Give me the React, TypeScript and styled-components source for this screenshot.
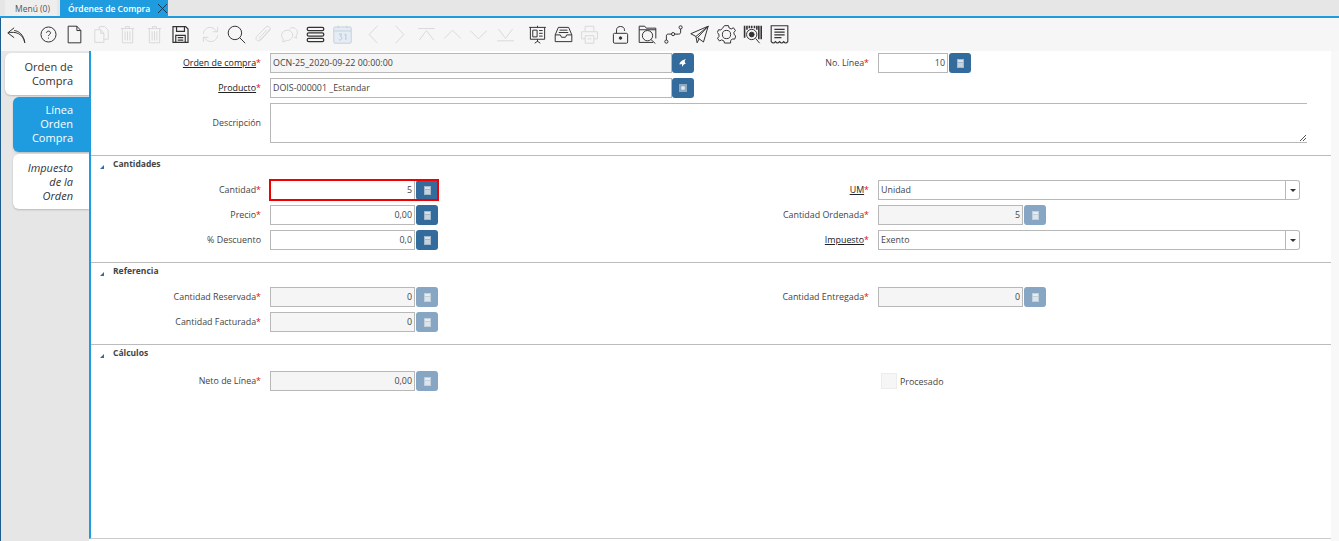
import React from 'react';
import styled, {createGlobalStyle} from 'styled-components';

const Global = createGlobalStyle`
  html, body {
    margin: 0;
    height: 100%;
    background: #fff;
    overflow: hidden;
    font-family: 'Open Sans', 'Noto Sans', sans-serif;
    font-size: 8.9px;
    color: #444;
  }
  #root {
    height: 100%;
  }
`;

const icons: Record<string, React.ReactNode> = {
  back: <path d="M9 3.500 1 10l8 6M1.500 10c9-2.500 19 1 21 12.500M9 7c6 .5 12 5 13.500 15.500" />,
  help: (
    <>
      <circle cx="12" cy="12" r="9.500" />
      <path d="M9.500 10c0-3 5-3 5 0 0 2-2.500 2-2.500 4M12 16v1.200" />
    </>
  ),
  file: <path d="M4 1.500h11l5 5.500v15.500H4zM15 1.500V7h5" />,
  copy: (
    <>
      <path d="M9 5.500V2h7l4.500 4.500V18H15" />
      <path d="M3.500 6H11l4 4.500V22H3.500zM11 6v4.500h4" />
    </>
  ),
  trash: (
    <>
      <path d="M3.500 4.500h17M9.500 4.500V2h5v2.500M5.500 4.500v18h13v-18" />
      <path d="M9 8v11.500M12 8v11.500M15 8v11.500" />
    </>
  ),
  save: (
    <g strokeWidth="1.500">
      <path d="M2.500 2h16l3 3v17h-19z" />
      <path d="M7 2v6h10V2M6 22v-9h12v9M8.500 16h7M8.500 19h7" />
    </g>
  ),
  refresh: (
    <>
      <path d="M3 11c.8-8 10-10.500 15-5l2.500 2.500M21 2.500v6h-6" />
      <path d="M21 13c-.8 8-10 10.500-15 5l-2.500-2.500M3 21.500v-6h6" />
    </>
  ),
  search: (
    <>
      <circle cx="10" cy="10" r="8.500" />
      <path d="m16 16 7 7" />
    </>
  ),
  clip: (
    <path d="M21 5.500 8.500 19c-3 3-8-.5-5-4.500L15 2.500c2.500-2.500 7 .5 4.500 3.500L9 18c-1.200 1.200-3-.3-2-1.500l9-10.500" />
  ),
  chat: (
    <>
      <path d="M9.500 6.500C5 6.500 2 9.500 2 13c0 1.800.8 3.300 2 4.300L3.500 21.500l4.500-2c4.500.5 8-2.500 8-6.500s-3-6.500-6.500-6.500z" />
      <path d="M12 5c3-3 9.500-1.500 10 4 .1 1.500-.4 3-1.500 4l.5 3.500-3.500-1.200" />
    </>
  ),
  bars: (
    <g strokeWidth="1.600">
      <rect x="1.500" y="3" width="21" height="4" rx="2" />
      <rect x="1.500" y="10" width="21" height="4" rx="2" />
      <rect x="1.500" y="17" width="21" height="4" rx="2" />
    </g>
  ),
  calendar: (
    <>
      <rect x="1" y="2.500" width="22" height="20.500" rx="1.500" fill="#e6ecf4" stroke="#c3d0df" />
      <path d="M1 7.500h22M6.500 1v3M17.500 1v3" stroke="#c3d0df" />
      <path d="M7.500 11.500h3.500l-1.800 2.800c3 0 2.300 4.700-.2 4.700-.9 0-1.500-.3-1.800-.9M14.500 12.500l1.800-1v7.500" stroke="#b8c6d6" />
    </>
  ),
  left: <path d="M17 1 6.500 12 17 23" />,
  right: <path d="M7 1l10.500 11L7 23" />,
  top: <path d="M1.500 4.500h21M3 19l9-12 9 12" />,
  up: <path d="M1.500 17 12 6.500 22.500 17" />,
  down: <path d="M1.500 7 12 17.500 22.500 7" />,
  bottom: <path d="M1.500 20h21M3 5l9 12 9-12" />,
  board: (
    <>
      <path d="M1.500 3h21M3 3v15h18V3M12 1v2M12 18v3M12 20.500 8.500 23M12 20.500l3.500 2.500" />
      <path d="M6 6.500h5.500V15H6zM14 7h4.500M14 10.500h4.500M14 14h4.500" />
    </>
  ),
  inbox: (
    <>
      <path d="M5.500 3h13l4 9.500V21h-21v-8.500zM1.500 12.500H8l1.500 3h5l1.500-3h6.500" />
      <path d="M7 6.500h10M6 9.500h12" />
    </>
  ),
  printer: (
    <>
      <path d="M6.500 8V1.500h11V8M6.500 17.500H2V8.500h20v9h-4.500" />
      <path d="M6.500 13.500h11V23h-11zM9.500 17.500h5" />
    </>
  ),
  lock: (
    <>
      <rect x="3" y="10.500" width="18" height="12.500" rx="1.500" />
      <path d="M7 10.500V6c0-5.500 10-5.500 10 0v1.500" />
      <circle cx="12" cy="16.500" r="1.600" fill="#333" />
    </>
  ),
  folder: (
    <>
      <path d="M19 22H1.500V1.500h7l2 2.500h12v13" />
      <path d="M1.500 6h21" />
      <circle cx="12" cy="13.500" r="6.500" />
      <path d="m16.500 18.500 5.500 5" />
    </>
  ),
  route: (
    <>
      <circle cx="3" cy="21" r="2" />
      <circle cx="11.500" cy="11.500" r="2" />
      <circle cx="21" cy="3" r="2" />
      <path d="M3 19v-5c0-2 1-2.500 2.500-2.500h4M13.500 11.500H18.500c1.800 0 2.500-1 2.500-2.500V5" />
    </>
  ),
  send: <path d="M23 1.500 1 11l6.500 3.500L23 1.500 9.500 16l7.500 5.500zM7.500 14.500 9 22.500l2.500-5" />,
  gear: (
    <>
      <path d="m9.500.8h5l.8 3 2.700 1.200 2.800-1.500 2.500 3.500-2 2.400.4 2.800 2.100 1.700-1.500 4-3-.3-2 2.200-.2 3H9.500l-.8-2.700-2.800-1.300-2.800 1.400-2.500-3.400 2-2.400-.4-2.900-1.800-2 1.500-3.500 3 .3 2-2.200z" />
      <circle cx="12" cy="12" r="5.200" />
    </>
  ),
  barcode: (
    <>
      <path d="M2 1v15M5 1v5M20 1v17M23 1v17M17.500 1v5" strokeWidth="2" />
      <path d="M8 1v3M11 1v3M14.500 1v3" strokeWidth="2" />
      <circle cx="11" cy="12" r="6.500" />
      <circle cx="11" cy="12" r="3" fill="#333" />
      <path d="m16 17 5 6" />
    </>
  ),
  receipt: (
    <g strokeWidth="1.400">
      <path d="M1.500 1h21v20c-1.700 2.300-3.600 2.300-5.200 0-1.600 2.300-3.500 2.300-5.200 0-1.600 2.300-3.500 2.300-5.200 0-1.600 2.300-3.600 2.300-5.400 0z" />
      <path d="M5.500 5.500h13M5.500 9h13M5.500 12.500h13M5.500 16h9" />
    </g>
  ),
};

const toolbar = [
  {name: 'back', gap: 2},
  {name: 'help', gap: 6},
  {name: 'file'},
  {name: 'copy', off: true},
  {name: 'trash', off: true},
  {name: 'trash', off: true},
  {name: 'save'},
  {name: 'refresh', off: true, gap: 3.500},
  {name: 'search'},
  {name: 'clip', off: true},
  {name: 'chat', off: true},
  {name: 'bars'},
  {name: 'calendar', off: true},
  {name: 'left', off: true, gap: 4.500},
  {name: 'right', off: true},
  {name: 'top', off: true},
  {name: 'up', off: true},
  {name: 'down', off: true},
  {name: 'bottom', off: true},
  {name: 'board', gap: 5.500},
  {name: 'inbox'},
  {name: 'printer', off: true},
  {name: 'lock', gap: 4.500},
  {name: 'folder'},
  {name: 'route'},
  {name: 'send'},
  {name: 'gear'},
  {name: 'barcode'},
  {name: 'receipt'},
];

const Icon = ({name}: {name: string}) => (
  <svg width="19" height="19" viewBox="0 0 24 24" fill="none" stroke="currentColor" strokeWidth="1.250">
    {icons[name]}
  </svg>
);

const Calc = ({off}: {off?: boolean}) => (
  <svg width="7" height="9" viewBox="0 0 7 9">
    <rect width="7" height="9" fill={off ? '#c2d0dd' : '#a3b8cb'} />
    <rect x="1" y="1" width="5" height="2" fill={off ? '#e8edf2' : '#dbe3ea'} />
    <rect x="1" y="4" width="5" height="4" fill={off ? '#dde4eb' : '#c6d2dd'} />
  </svg>
);

const Field = ({
  value,
  width,
  off,
  focus,
}: {
  value: string;
  width: number;
  off?: boolean;
  focus?: boolean;
}) => (
  <Numeric $focus={focus}>
    <Input $w={width} $off={off} $right>
      {value}
    </Input>
    <ActionButton $off={off}>
      <Calc off={off} />
    </ActionButton>
  </Numeric>
);

const Caption = ({text, link}: {text: string; link?: boolean}) => (
  <Label>
    <LabelText $link={link}>{text}</LabelText>
    <Required>*</Required>
  </Label>
);

const Section = ({title, top, children}: {title: string; top?: number; children: React.ReactNode}) => (
  <Group>
    <GroupTitle>
      <Arrow />
      {title}
    </GroupTitle>
    <Rows $top={top}>{children}</Rows>
  </Group>
);

const Select = ({value}: {value: string}) => (
  <SelectWrap>
    <Input $grow>{value}</Input>
    <SelectButton>
      <Caret />
    </SelectButton>
  </SelectWrap>
);

export default function App() {
  return (
    <Page>
      <Global />
      <TabBar>
        <WindowTab>Menú (0)</WindowTab>
        <WindowTab $active>
          Órdenes de Compra
          <CloseIcon width="9" height="9" viewBox="0 0 9 9">
            <path d="M0 0l9 9M9 0 0 9" stroke="#1c3850" strokeWidth="1" fill="none" />
          </CloseIcon>
        </WindowTab>
      </TabBar>
      <Toolbar>
        {toolbar.map((item, i) => (
          <ToolButton key={i} $off={item.off} $gap={item.gap}>
            <Icon name={item.name} />
          </ToolButton>
        ))}
      </Toolbar>
      <Body>
        <Side>
          <SideTab $first>Orden de Compra</SideTab>
          <SideTab $active>Línea Orden Compra</SideTab>
          <SideTab $italic>Impuesto de la Orden</SideTab>
        </Side>
        <Content>
          <Head>
            <Caption text="Orden de compra" link />
            <WithButton>
              <Input $w={402} $off>
                OCN-25_2020-09-22 00:00:00
              </Input>
              <ActionButton>
                <svg width="8" height="8" viewBox="0 0 8 8">
                  <path d="M7 0C3 1 .5 3 .5 5.500L3 5v3c1-2 2-3 4-3.500-1.500-.8-1.800-3 0-4.500z" fill="#fff" />
                </svg>
              </ActionButton>
            </WithButton>
            <Caption text="No. Línea" />
            <Field value="10" width={70} />

            <Caption text="Producto" link />
            <WithButton>
              <Input $w={402}>DOIS-000001 _Estandar</Input>
              <ActionButton>
                <svg width="8" height="8" viewBox="0 0 8 8">
                  <rect width="8" height="8" fill="#8eaac3" />
                  <circle cx="4" cy="4" r="2" fill="#dfe7ee" />
                </svg>
              </ActionButton>
            </WithButton>
            <span />
            <span />

            <Label>Descripción</Label>
            <TextArea />
          </Head>

          <Section title="Cantidades">
            <Caption text="Cantidad" />
            <Field value="5" width={145} focus />
            <Caption text="UM" link />
            <Select value="Unidad" />

            <Caption text="Precio" />
            <Field value="0,00" width={145} />
            <Caption text="Cantidad Ordenada" />
            <Field value="5" width={145} off />

            <Label>% Descuento</Label>
            <Field value="0,0" width={145} />
            <Caption text="Impuesto" link />
            <Select value="Exento" />
          </Section>

          <Section title="Referencia">
            <Caption text="Cantidad Reservada" />
            <Field value="0" width={145} off />
            <Caption text="Cantidad Entregada" />
            <Field value="0" width={145} off />

            <Caption text="Cantidad Facturada" />
            <Field value="0" width={145} off />
          </Section>

          <Section title="Cálculos" top={26}>
            <Caption text="Neto de Línea" />
            <Field value="0,00" width={145} off />
            <span />
            <CheckRow>
              <CheckBox />
              Procesado
            </CheckRow>
          </Section>
        </Content>
        <Track />
      </Body>
    </Page>
  );
}

const Page = styled.div`
  height: 541px;
  display: flex;
  flex-direction: column;
`;

const TabBar = styled.div`
  height: 16px;
  flex: none;
  display: flex;
  align-items: stretch;
  gap: 3px;
  padding-left: 5px;
  background: #e6e6e6;
  border-bottom: 2px solid #1f9ce0;
`;

const WindowTab = styled.div<{$active?: boolean}>`
  display: flex;
  align-items: center;
  padding: ${p => (p.$active ? '0 1px 0 8px' : '0 0 0 10px')};
  width: ${p => (p.$active ? '108px' : '52px')};
  box-sizing: border-box;
  background: ${p => (p.$active ? '#1f9ce0' : '#eeeeee')};
  color: ${p => (p.$active ? '#fff' : '#555')};
  font-weight: ${p => (p.$active ? 600 : 400)};
  font-size: 8.5px;
  white-space: nowrap;
`;

const CloseIcon = styled.svg`
  margin-left: auto;
`;

const Toolbar = styled.div`
  height: 33px;
  flex: none;
  display: flex;
  align-items: center;
  background: #f6f6f6;
  border-left: 1px solid #1d5c8c;
  box-sizing: border-box;
`;

const ToolButton = styled.div<{$off?: boolean; $gap?: number}>`
  width: 26.4px;
  flex: none;
  display: flex;
  justify-content: center;
  margin-left: ${p => p.$gap || 0}px;
  color: ${p => (p.$off ? '#d9d9d9' : '#333')};
`;

const Body = styled.div`
  flex: 1;
  display: flex;
  min-height: 0;
`;

const Side = styled.div`
  width: 89px;
  flex: none;
  box-sizing: border-box;
  padding-top: 2px;
  background: #e6e6e6;
  border-left: 1px solid #1d5c8c;
  display: flex;
  flex-direction: column;
  align-items: flex-end;
  gap: 2px;
`;

const SideTab = styled.div<{$active?: boolean; $first?: boolean; $italic?: boolean}>`
  width: ${p => (p.$first ? '84px' : '76px')};
  box-sizing: border-box;
  padding: ${p => (p.$first ? '7px 16px 7px 14px' : p.$italic ? '7px 16px 6px 12px' : '6px 16px 7px 12px')};
  border-radius: 6px 0 0 6px;
  background: ${p => (p.$active ? '#1f9ce0' : '#fff')};
  color: ${p => (p.$active ? '#fff' : '#333')};
  font-style: ${p => (p.$italic ? 'italic' : 'normal')};
  font-size: 11px;
  line-height: 14px;
  text-align: right;
  box-shadow: 0 1px 2px rgba(0, 0, 0, 0.2);
`;

const Content = styled.div`
  flex: 1;
  min-width: 0;
  border-left: 2px solid #1f9ce0;
  border-bottom: 1px solid #ccc;
  box-sizing: border-box;
  height: 488px;
`;

const Track = styled.div`
  width: 8px;
  flex: none;
  background: #f8f8f8;
`;

const gridColumns = 'grid-template-columns: 179px 510px 98px 429px;';

const Head = styled.div`
  display: grid;
  ${gridColumns}
  grid-auto-rows: minmax(20px, auto);
  row-gap: 5px;
  padding: 2px 0 12px;
`;

const Group = styled.section`
  position: relative;
  border-top: 1px solid #bcbcbc;
  padding-bottom: 12px;
`;

const GroupTitle = styled.div`
  position: absolute;
  left: 22px;
  top: 1px;
  line-height: 13px;
  font-weight: 700;
  font-size: 8.5px;
  color: #444;
`;

const Arrow = styled.i`
  position: absolute;
  left: -13px;
  top: 8px;
  border-style: solid;
  border-width: 0 0 4px 4px;
  border-color: transparent transparent #2a6db0 transparent;
`;

const Rows = styled.div<{$top?: number}>`
  display: grid;
  ${gridColumns}
  grid-auto-rows: 20px;
  row-gap: 5px;
  padding-top: ${p => p.$top || 24}px;
`;

const Label = styled.label`
  display: flex;
  align-items: center;
  justify-content: flex-end;
  padding: 0 9px 2px 0;
  white-space: nowrap;
  color: #444;
`;

const LabelText = styled.span<{$link?: boolean}>`
  color: ${p => (p.$link ? '#222' : '#444')};
  text-decoration: ${p => (p.$link ? 'underline' : 'none')};
`;

const Required = styled.span`
  color: #e01010;
`;

const WithButton = styled.div`
  display: flex;
`;

const Numeric = styled.div<{$focus?: boolean}>`
  display: flex;
  align-self: start;
  width: max-content;
  gap: 1px;
  outline: ${p => (p.$focus ? '2px solid #f00000' : 'none')};
  outline-offset: ${p => (p.$focus ? '-1px' : '0')};
`;

const Input = styled.div<{$w?: number; $off?: boolean; $right?: boolean; $grow?: boolean}>`
  height: 20px;
  box-sizing: border-box;
  width: ${p => (p.$w ? `${p.$w}px` : 'auto')};
  flex: ${p => (p.$grow ? 1 : 'none')};
  border: 1px solid #b8b8b8;
  background: ${p => (p.$off ? '#f5f5f5' : '#fff')};
  padding: 0 2px;
  line-height: 18px;
  text-align: ${p => (p.$right ? 'right' : 'left')};
  color: #444;
`;

const ActionButton = styled.div<{$off?: boolean}>`
  width: 22px;
  height: 20px;
  flex: none;
  display: flex;
  align-items: center;
  justify-content: center;
  border-radius: 3px;
  background: ${p => (p.$off ? '#86a6c4' : '#336b9c')};
`;

const TextArea = styled.div`
  grid-column: 2 / 5;
  height: 40px;
  box-sizing: border-box;
  border: 1px solid #b8b8b8;
  border-right: 0;
  position: relative;
  &::after {
    content: '';
    position: absolute;
    right: 1px;
    bottom: 1px;
    width: 6px;
    height: 6px;
    background: linear-gradient(135deg, transparent 45%, #555 45%, #555 55%, transparent 55%, transparent 70%, #555 70%, #555 80%, transparent 80%);
  }
`;

const SelectWrap = styled.div`
  display: flex;
  width: 422px;
`;

const SelectButton = styled.div`
  width: 14px;
  height: 20px;
  flex: none;
  box-sizing: border-box;
  display: flex;
  align-items: center;
  justify-content: center;
  border: 1px solid #b8b8b8;
  border-left: 0;
  border-radius: 0 3px 3px 0;
  background: #fff;
`;

const Caret = styled.i`
  border-style: solid;
  border-width: 3px 3px 0;
  border-color: #333 transparent transparent;
`;

const CheckRow = styled.div`
  display: flex;
  align-items: center;
  gap: 3px;
  padding-left: 3px;
`;

const CheckBox = styled.i`
  width: 16px;
  height: 16px;
  box-sizing: border-box;
  background: #f6f6f6;
  border: 1px solid #ececec;
`;
